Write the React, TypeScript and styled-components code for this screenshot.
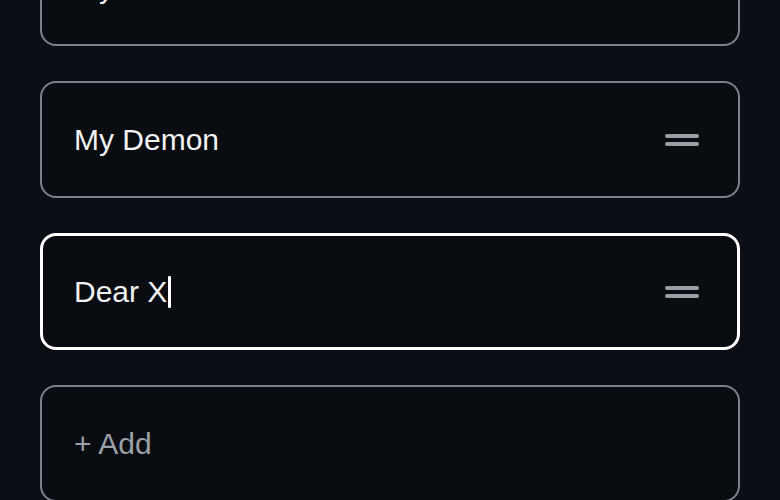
import React from "react";
import styled, { createGlobalStyle } from "styled-components";

const Global = createGlobalStyle`
  html, body { margin: 0; padding: 0; background: #0b0f15; }
  body { font-family: "Liberation Sans", Arial, sans-serif; overflow: hidden; }
`;

const Page = styled.div`
  width: 780px;
  height: 500px;
  overflow: hidden;
  background: #0b0f15;
`;

const List = styled.div`
  display: flex;
  flex-direction: column;
  gap: 35px;
  padding: 0 40px;
  margin-top: -71px;
`;

const Card = styled.div<{ $focused?: boolean }>`
  box-sizing: border-box;
  height: 117px;
  display: flex;
  align-items: center;
  justify-content: space-between;
  border: ${(p) => (p.$focused ? "3px solid #ffffff" : "2px solid #7c8088")};
  border-radius: 16px;
  background: #090c11;
  padding: 0 ${(p) => (p.$focused ? 38 : 39)}px 0 ${(p) => (p.$focused ? 31 : 32)}px;
`;

const Label = styled.span<{ $muted?: boolean }>`
  font-size: 30px;
  line-height: 34px;
  color: ${(p) => (p.$muted ? "#9ca1a8" : "#f1f2f3")};
  display: inline-flex;
  align-items: center;
`;

const Caret = styled.span`
  display: inline-block;
  width: 3px;
  height: 32px;
  background: #ffffff;
  margin-left: 1px;
  border-radius: 1px;
`;

const Handle = styled.div`
  display: flex;
  flex-direction: column;
  gap: 4px;
  width: 34px;
`;

const HandleLine = styled.span`
  display: block;
  height: 4px;
  border-radius: 2px;
  background: #9a9ea5;
`;

const DragHandle = () => (
  <Handle>
    <HandleLine />
    <HandleLine />
  </Handle>
);

export default function App() {
  return (
    <Page>
      <Global />
      <List>
        <Card>
          <Label>My Karma Ride</Label>
          <DragHandle />
        </Card>
        <Card>
          <Label>My Demon</Label>
          <DragHandle />
        </Card>
        <Card $focused>
          <Label>
            Dear X<Caret />
          </Label>
          <DragHandle />
        </Card>
        <Card>
          <Label $muted>+ Add</Label>
        </Card>
      </List>
    </Page>
  );
}
